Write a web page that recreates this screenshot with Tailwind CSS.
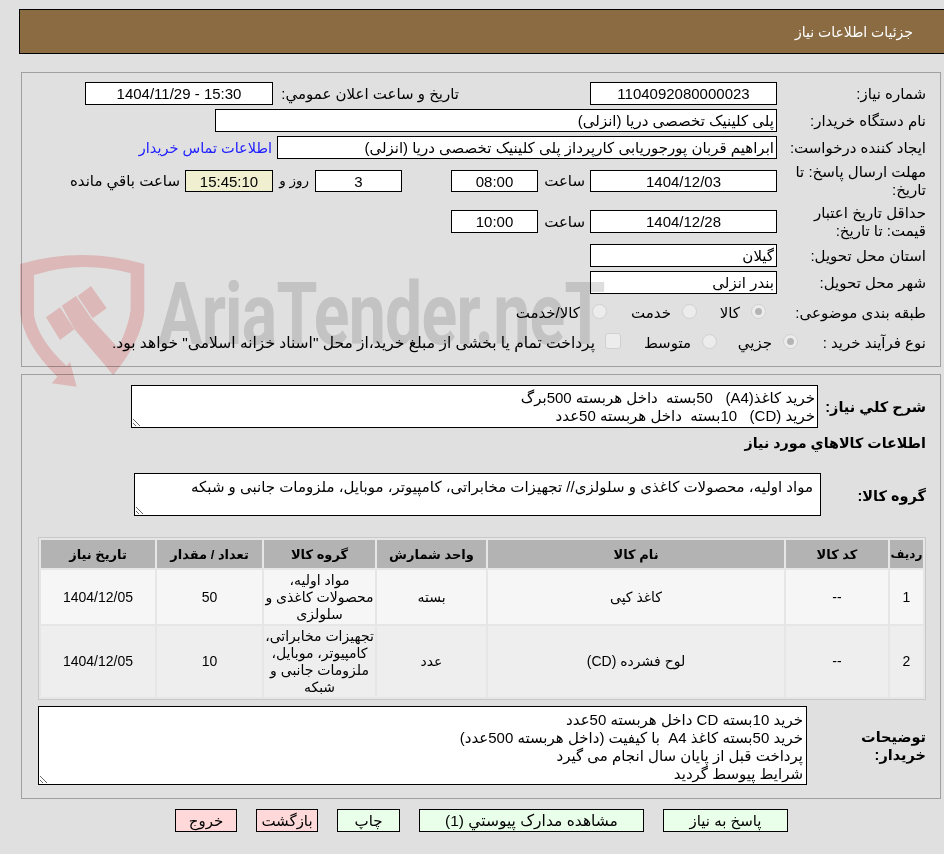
<!DOCTYPE html>
<html lang="fa" dir="rtl">
<head>
<meta charset="UTF-8">
<title>جزئيات اطلاعات نياز</title>
<script src="https://cdn.jsdelivr.net/npm/@tailwindcss/browser@4"></script>
</head>
<body class="bg-[#e0e0e0] text-black text-[15px] leading-[18px] font-['Liberation_Sans','DejaVu_Sans',sans-serif] w-[944px] h-[854px] overflow-hidden relative">

<!-- header -->
<div class="ml-[19px] mr-[-2px] mt-[9px] h-[45px] border border-black bg-[#8b6b41] flex items-center pr-[32px] text-[14px] text-white">جزئيات اطلاعات نياز</div>

<!-- top panel -->
<div class="ml-[21px] mr-[3px] mt-[18px] h-[295px] border border-[#a0a0a0] pt-[9px] pr-[13px]">
  <div class="flex items-center h-[23px]">
    <label class="w-[150px] pr-[1px] pl-[11px]">شماره نياز:</label>
    <input readonly value="1104092080000023" class="w-[187px] h-[23px] border border-black bg-white text-center">
    <label class="mr-[131px] w-[181px] whitespace-nowrap">تاريخ و ساعت اعلان عمومي:</label>
    <input readonly value="15:30 - 1404/11/29" class="mr-[5px] w-[188px] h-[23px] border border-black bg-white text-center">
  </div>
  <div class="flex items-center h-[23px] mt-[4px]">
    <label class="w-[150px] pr-[1px] pl-[11px]">نام دستگاه خريدار:</label>
    <input readonly value="پلی کلینیک تخصصی دریا (انزلی)" class="w-[562px] h-[23px] border border-black bg-white pr-[2px]">
  </div>
  <div class="flex items-center h-[23px] mt-[4px]">
    <label class="w-[150px] pr-[1px] whitespace-nowrap">ايجاد کننده درخواست:</label>
    <input readonly value="ابراهیم قربان پورجوریابی کارپرداز پلی کلینیک تخصصی دریا (انزلی)" class="w-[500px] h-[23px] border border-black bg-white pr-[2px]">
    <a href="#" class="mr-[5px] text-[14.5px] text-[#2020ff] whitespace-nowrap">اطلاعات تماس خريدار</a>
  </div>
  <div class="flex items-center h-[22px] mt-[11px]">
    <label class="w-[150px] pr-[1px] pl-[11px]">مهلت ارسال پاسخ: تا تاريخ:</label>
    <input readonly value="1404/12/03" class="w-[187px] h-[22px] border border-black bg-white text-center">
    <span class="w-[52px] pr-[5px]">ساعت</span>
    <input readonly value="08:00" class="w-[87px] h-[22px] border border-black bg-white text-center">
    <input readonly value="3" class="mr-[49px] w-[87px] h-[22px] border border-black bg-white text-center">
    <span class="mr-[6px] w-[28px] text-[13.5px] whitespace-nowrap">روز و</span>
    <input readonly value="15:45:10" class="mr-[8px] w-[88px] h-[22px] border border-black bg-[#f0f0d0] text-center">
    <span class="mr-[5px] whitespace-nowrap">ساعت باقي مانده</span>
  </div>
  <div class="flex items-center h-[23px] mt-[18px]">
    <label class="w-[150px] pr-[1px] pl-[11px]">حداقل تاريخ اعتبار قيمت: تا تاريخ:</label>
    <input readonly value="1404/12/28" class="w-[187px] h-[23px] border border-black bg-white text-center">
    <span class="w-[52px] pr-[5px]">ساعت</span>
    <input readonly value="10:00" class="w-[87px] h-[23px] border border-black bg-white text-center">
  </div>
  <div class="flex items-center h-[23px] mt-[11px]">
    <label class="w-[150px] pr-[1px] pl-[11px]">استان محل تحويل:</label>
    <input readonly value="گیلان" class="w-[187px] h-[23px] border border-black bg-white pr-[2px]">
  </div>
  <div class="flex items-center h-[23px] mt-[4px]">
    <label class="w-[150px] pr-[1px] pl-[11px]">شهر محل تحويل:</label>
    <input readonly value="بندر انزلی" class="w-[187px] h-[23px] border border-black bg-white pr-[2px]">
  </div>
  <!-- radios -->
  <div class="flex items-center h-[24px] mt-[7px]">
    <label class="w-[161px] pr-[1px] whitespace-nowrap">طبقه بندی موضوعی:</label>
    <span class="w-[15px] h-[15px] rounded-full border border-[#d0d0d0] bg-[#ececec] flex items-center justify-center mt-[-4px]"><span class="w-[7px] h-[7px] rounded-full bg-[#b4b4b4]"></span></span>
    <span class="mr-[11px] w-[43px]">کالا</span>
    <span class="w-[15px] h-[15px] rounded-full border border-[#d0d0d0] bg-[#ececec] mt-[-4px]"></span>
    <span class="mr-[11px] w-[64px]">خدمت</span>
    <span class="w-[15px] h-[15px] rounded-full border border-[#d0d0d0] bg-[#ececec] mt-[-4px]"></span>
    <span class="mr-[12px]">کالا/خدمت</span>
  </div>
  <div class="flex items-center h-[24px] mt-[6px]">
    <label class="w-[129px] pr-[1px] whitespace-nowrap">نوع فرآیند خرید :</label>
    <span class="w-[15px] h-[15px] rounded-full border border-[#d0d0d0] bg-[#ececec] flex items-center justify-center mt-[-4px]"><span class="w-[7px] h-[7px] rounded-full bg-[#b4b4b4]"></span></span>
    <span class="mr-[11px] w-[55px]">جزيي</span>
    <span class="w-[15px] h-[15px] rounded-full border border-[#d0d0d0] bg-[#ececec] mt-[-4px]"></span>
    <span class="mr-[11px] w-[70px]">متوسط</span>
    <span class="w-[16px] h-[16px] rounded-[3px] border border-[#d0d0d0] bg-[#ececec] mt-[-4px]"></span>
    <span class="mr-[10px] text-[15.5px] whitespace-nowrap">پرداخت تمام یا بخشی از مبلغ خرید،از محل "اسناد خزانه اسلامی" خواهد بود.</span>
  </div>
</div>

<!-- details panel -->
<div class="ml-[21px] mr-[3px] mt-[7px] h-[425px] border border-[#a0a0a0] pt-[10px] pr-[13px]">
  <div class="flex items-center">
    <label class="w-[109px] pr-[1px] text-[14.5px] font-bold whitespace-nowrap">شرح كلي نياز:</label>
    <textarea readonly class="w-[687px] h-[43px] border border-black bg-white pr-[2px] pt-[3px] overflow-hidden">خرید کاغذ(A4)   50بسته  داخل هربسته 500برگ
خرید (CD)   10بسته  داخل هربسته 50عدد</textarea>
  </div>
  <div class="mt-[6px] pr-[1px] text-[14.3px] font-bold">اطلاعات كالاهاي مورد نياز</div>
  <div class="flex items-center mt-[21px]">
    <label class="w-[106px] pr-[1px] text-[14.5px] font-bold pt-[3px]">گروه کالا:</label>
    <textarea readonly class="w-[687px] h-[43px] border border-black bg-white pr-[7px] pt-[4px] overflow-hidden">مواد اولیه، محصولات کاغذی و سلولزی// تجهیزات مخابراتی، کامپیوتر، موبایل، ملزومات جانبی و شبکه</textarea>
  </div>

  <table class="mt-[21px] mr-[1px] w-[888px] table-fixed border-separate border-spacing-[2px] border border-[#c8c8c8] bg-[#e6e6e6] text-[14px] leading-[17px] text-center">
    <thead>
      <tr class="h-[28px] bg-[#b3b3b3] text-[13px]">
        <th class="w-[33px] text-[12px] font-bold">رديف</th>
        <th class="w-[102px] font-bold">کد کالا</th>
        <th class="w-[296px] font-bold">نام کالا</th>
        <th class="w-[109px] font-bold">واحد شمارش</th>
        <th class="w-[111px] font-bold">گروه کالا</th>
        <th class="w-[105px] font-bold">تعداد / مقدار</th>
        <th class="w-[114px] font-bold">تاريخ نياز</th>
      </tr>
    </thead>
    <tbody>
      <tr class="h-[54px] bg-[#f6f6f6]">
        <td>1</td><td>--</td><td>کاغذ کپی</td><td>بسته</td>
        <td>مواد اولیه، محصولات کاغذی و سلولزی</td>
        <td>50</td><td>1404/12/05</td>
      </tr>
      <tr class="h-[71px] bg-[#eeeeee]">
        <td>2</td><td>--</td><td>لوح فشرده (CD)</td><td>عدد</td>
        <td>تجهیزات مخابراتی، کامپیوتر، موبایل، ملزومات جانبی و شبکه</td>
        <td>10</td><td>1404/12/05</td>
      </tr>
    </tbody>
  </table>

  <div class="flex items-center mt-[6px]">
    <label class="w-[120px] pr-[1px] text-[14.5px] font-bold">توضيحات<br>خريدار:</label>
    <textarea readonly class="w-[769px] h-[79px] border border-black bg-white pr-[3px] pt-[4px] overflow-hidden">خرید 10بسته CD داخل هربسته 50عدد
خرید 50بسته کاغذ A4  با کیفیت (داخل هربسته 500عدد)
پرداخت قبل از پایان سال انجام می گیرد
شرایط پیوسط گردید</textarea>
  </div>
</div>

<!-- buttons -->
<div class="flex gap-[19px] mt-[10px] pr-[156px]">
  <button class="w-[125px] h-[23px] border border-black bg-[#eaffea]">پاسخ به نياز</button>
  <button class="w-[225px] h-[23px] border border-black bg-[#eaffea] text-[15.5px]">مشاهده مدارک پيوستي (1)</button>
  <button class="w-[63px] h-[23px] border border-black bg-[#eaffea]">چاپ</button>
  <button class="w-[62px] h-[23px] border border-black bg-[#ffd9d9]">بازگشت</button>
  <button class="w-[62px] h-[23px] border border-black bg-[#ffd9d9]">خروج</button>
</div>

<!-- watermark, multiplied over the form -->
<div class="absolute left-[10px] top-[240px] w-[640px] h-[150px] pointer-events-none mix-blend-multiply" dir="ltr">
  <svg class="absolute left-0 top-0" width="300" height="150" viewBox="0 0 900 450">
    <path d="M30 72 Q215 18 403 72 V215 Q395 300 310 405 L290 380 Q350 290 362 210 V100 Q215 60 72 105 V225 Q85 300 170 378 L180 365 L200 440 L125 430 L142 410 Q40 310 30 215 Z" fill="#fbd2d2"/>
    <path d="M155 197 L198 168 L245 237 L335 335 L310 405 L195 270 Z" fill="#fbd2d2"/>
    <path d="M108 232 L150 202 L193 268 L150 300 Z" fill="#fbd2d2"/>
    <path d="M203 168 L243 138 L290 205 L248 235 Z" fill="#fbd2d2"/>
  </svg>
  <span class="absolute left-[148px] top-[29px] origin-left scale-x-[0.76] text-[87px] leading-[90px] font-bold text-[#dedede] font-['Roboto',sans-serif] tracking-[-1px] whitespace-nowrap">AriaTender.neT</span>
</div>

</body>
</html>
